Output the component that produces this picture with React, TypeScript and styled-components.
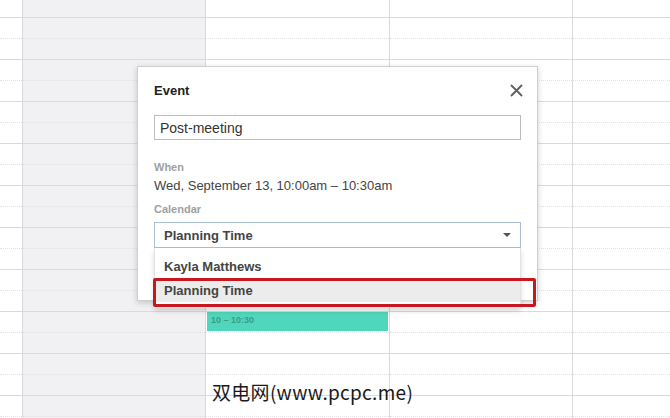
import React from "react";
import styled, { createGlobalStyle } from "styled-components";

const Global = createGlobalStyle`
  html, body { margin: 0; padding: 0; background: #fff; }
  body { width: 670px; height: 418px; overflow: hidden; font-family: "Liberation Sans", Arial, sans-serif; }
`;

const Page = styled.div`
  position: relative;
  width: 670px;
  height: 418px;
  overflow: hidden;
`;

const Grid = styled.div`
  display: grid;
  grid-template-columns: 22px 183px 184px 183px 1fr;
  height: 100%;
`;

const DayColumn = styled.div<{ $shaded?: boolean; $first?: boolean }>`
  display: flex;
  flex-direction: column;
  padding-top: 17px;
  background: ${(p) => (p.$shaded ? "#f1f0f3" : "#fff")};
  border-left: ${(p) => (p.$first ? "none" : "1px solid #d9d9dc")};
`;

const Slot = styled.div<{ $half?: boolean }>`
  flex: 0 0 21px;
  box-sizing: border-box;
  border-top: 1px ${(p) => (p.$half ? "dotted #e2e2e6" : "solid #dadadd")};
  display: flex;
  flex-direction: column;
`;

const EventBlock = styled.div`
  height: 19px;
  margin-right: 1px;
  margin-left: 1px;
  background: #4fd6bb;
  box-sizing: border-box;
  padding: 3px 0 0 4px;
  font-size: 9px;
  font-weight: bold;
  color: #3d9b86;
  line-height: 11px;
`;

const Dialog = styled.div`
  position: absolute;
  left: 137px;
  top: 66px;
  width: 401px;
  height: 235px;
  box-sizing: border-box;
  background: #fff;
  border: 1px solid #cfcfcf;
  box-shadow: 0 2px 6px rgba(0, 0, 0, 0.18);
  padding: 14px 16px 0 16px;
  display: flex;
  flex-direction: column;
`;

const Header = styled.div`
  display: flex;
  align-items: center;
  justify-content: space-between;
  height: 18px;
  margin-bottom: 16px;
`;

const Title = styled.div`
  font-size: 13px;
  font-weight: bold;
  color: #222;
`;

const Close = styled.div`
  width: 16px;
  height: 16px;
  margin-right: -3px;
  display: flex;
  align-items: center;
  justify-content: center;
`;

const TextInput = styled.div`
  height: 25px;
  box-sizing: border-box;
  border: 1px solid #bdbdbd;
  padding: 0 5px;
  display: flex;
  align-items: center;
  font-size: 14px;
  color: #333;
`;

const Label = styled.div<{ $gap: number }>`
  margin-top: ${(p) => p.$gap}px;
  font-size: 11px;
  font-weight: bold;
  color: #a0a0a0;
  line-height: 14px;
`;

const Value = styled.div`
  margin-top: 4px;
  font-size: 13px;
  color: #444;
  line-height: 16px;
`;

const SelectWrap = styled.div`
  position: relative;
  margin-top: 6px;
`;

const Select = styled.div`
  height: 26px;
  box-sizing: border-box;
  border: 1px solid #a8bfd5;
  padding: 0 9px 0 9px;
  display: flex;
  align-items: center;
  justify-content: space-between;
  font-size: 13px;
  font-weight: bold;
  color: #444;
`;

const Menu = styled.div`
  position: absolute;
  left: 0;
  right: 0;
  top: 26px;
  background: #fff;
  border: 1px solid #e2e2e2;
  border-top: none;
  box-shadow: 0 3px 5px rgba(0, 0, 0, 0.15);
  padding-bottom: 5px;
  z-index: 2;
`;

const Option = styled.div<{ $active?: boolean; $h: number }>`
  height: ${(p) => p.$h}px;
  display: flex;
  align-items: center;
  padding: ${(p) => (p.$active ? "0 9px" : "6px 9px 0")};
  box-sizing: border-box;
  font-size: 13px;
  font-weight: bold;
  color: #444;
  background: ${(p) => (p.$active ? "#ececec" : "#fff")};
`;

const Highlight = styled.div`
  position: absolute;
  left: 153px;
  top: 278px;
  width: 383px;
  height: 29px;
  box-sizing: border-box;
  border: 3px solid #c8181f;
  border-radius: 2px;
  z-index: 3;
`;

const Watermark = styled.div`
  position: absolute;
  left: 212px;
  top: 379px;
  font-family: "Noto Sans CJK SC", "Noto Sans", sans-serif;
  font-size: 19px;
  line-height: 26px;
  color: #1a1a1a;
  letter-spacing: 0.3px;
`;

const slots = Array.from({ length: 20 }, (_, i) => i);

function Column({ shaded, first, withEvent }: { shaded?: boolean; first?: boolean; withEvent?: boolean }) {
  return (
    <DayColumn $shaded={shaded} $first={first}>
      {slots.map((i) => (
        <Slot key={i} $half={i % 2 === 1}>
          {withEvent && i === 14 ? <EventBlock>10 – 10:30</EventBlock> : null}
        </Slot>
      ))}
    </DayColumn>
  );
}

export default function App() {
  return (
    <Page>
      <Global />
      <Grid>
        <Column first />
        <Column shaded />
        <Column withEvent />
        <Column />
        <Column />
      </Grid>
      <Dialog>
        <Header>
          <Title>Event</Title>
          <Close>
            <svg width="13" height="13" viewBox="0 0 13 13">
              <path d="M1 1 L12 12 M12 1 L1 12" stroke="#5f5f5f" strokeWidth="1.8" fill="none" />
            </svg>
          </Close>
        </Header>
        <TextInput>Post-meeting</TextInput>
        <Label $gap={20}>When</Label>
        <Value>Wed, September 13, 10:00am – 10:30am</Value>
        <Label $gap={8}>Calendar</Label>
        <SelectWrap>
          <Select>
            <span>Planning Time</span>
            <svg width="8" height="5" viewBox="0 0 8 5">
              <path d="M0 0 H8 L4 4 Z" fill="#555" />
            </svg>
          </Select>
          <Menu>
            <Option $h={30}>Kayla Matthews</Option>
            <Option $h={24} $active>Planning Time</Option>
          </Menu>
        </SelectWrap>
      </Dialog>
      <Highlight />
      <Watermark>双电网(www.pcpc.me)</Watermark>
    </Page>
  );
}
